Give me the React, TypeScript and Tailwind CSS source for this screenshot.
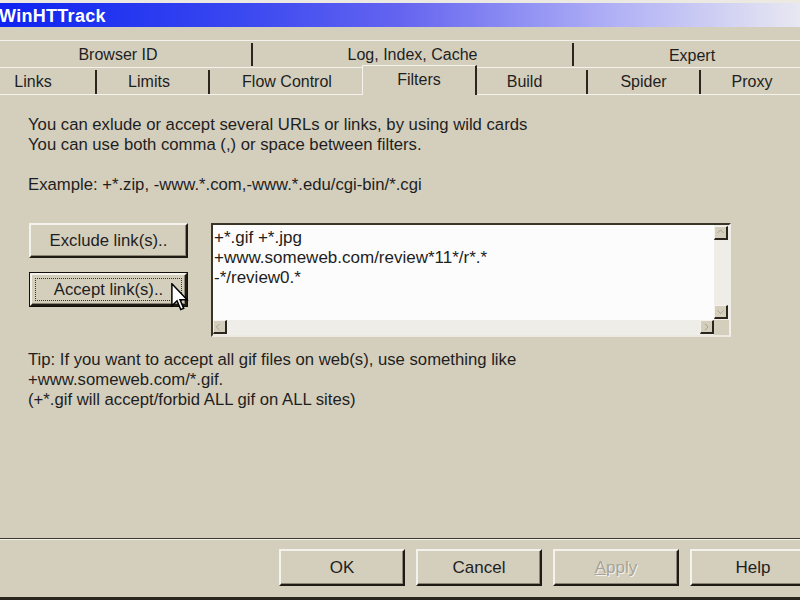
import React from "react";

const btn =
  "flex items-center justify-center border-2 border-t-[#f4f2ec] border-l-[#f4f2ec] border-r-[#1e1a14] border-b-[#1e1a14] shadow-[inset_-1px_-1px_0_#8c8678] bg-[#d4cebd]";

function ArrowBox({ dir }: { dir: "up" | "down" | "left" | "right" }) {
  const pts: Record<string, string> = {
    up: "3,7 7,3 11,7",
    down: "3,5 7,9 11,5",
    left: "7,3 3,7 7,11",
    right: "5,3 9,7 5,11",
  };
  return (
    <div className="w-[14px] h-[14px] bg-[#d4cebd] border border-t-[#f4f2ec] border-l-[#f4f2ec] border-r-[#2a261e] border-b-[#2a261e] border-r-2 border-b-2 flex items-center justify-center">
      <svg width="12" height="12" viewBox="0 0 14 14">
        <polyline points={pts[dir]} fill="none" stroke="#9a9488" strokeWidth="1" />
      </svg>
    </div>
  );
}

export default function App() {
  return (
    <div className="relative w-[800px] h-[600px] overflow-hidden bg-[#d4cebd] flex flex-col text-[#1e1e1e] font-['Liberation_Sans',Arial,sans-serif]">
      {/* Title bar */}
      <div className="h-[3px] bg-[#ebe9e2]" />
      <div className="h-[24px] flex items-center bg-[linear-gradient(90deg,#0e24f0_0%,#3a48f0_30%,#6464f0_50%,#acacf6_75%,#e8e8f2_100%)]">
        <span className="text-white font-bold text-[18px] leading-none -ml-[1px] mt-[1px] tracking-[0.3px]">WinHTTrack</span>
      </div>
      <div className="h-[13px]" />

      {/* Tab row 1 */}
      <div className="h-[27px] flex border-t border-[#f4f2ec] text-[16px]">
        <div className="shrink-0 -ml-[15px] w-[268px] mt-[2px] mb-[1px] border-r-2 border-[#2a261e] flex items-center justify-center pt-[1px]">
          Browser ID
        </div>
        <div className="shrink-0 w-[321px] mt-[2px] mb-[1px] border-r-2 border-[#2a261e] flex items-center justify-center pt-[1px]">
          Log, Index, Cache
        </div>
        <div className="shrink-0 w-[240px] flex items-center justify-center pt-[3px] pr-[4px]">Expert</div>
      </div>

      {/* Tab row 2 */}
      <div className="h-[28px] flex text-[16px]">
        <div className="shrink-0 -ml-[29px] w-[126px] border-t border-b border-[#f4f2ec] flex">
          <div className="flex-1 mt-[2px] border-r-2 border-[#2a261e] flex items-center justify-center">Links</div>
        </div>
        <div className="shrink-0 w-[113px] border-t border-b border-[#f4f2ec] flex">
          <div className="flex-1 mt-[2px] border-r-2 border-[#2a261e] flex items-center justify-center pr-[7px]">Limits</div>
        </div>
        <div className="shrink-0 w-[152px] border-t border-b border-[#f4f2ec] flex items-center justify-center pl-[2px] pt-[2px]">
          Flow Control
        </div>
        <div className="shrink-0 relative z-10 -mt-[2px] h-[30px] w-[115px] bg-[#d4cebd] border-l border-t border-[#f4f2ec] border-r-2 border-r-[#2a261e] flex items-center justify-center pb-[1px]">
          Filters
        </div>
        <div className="shrink-0 w-[111px] border-t border-b border-[#f4f2ec] flex">
          <div className="flex-1 mt-[2px] border-r-2 border-[#2a261e] flex items-center justify-center pr-[14px]">Build</div>
        </div>
        <div className="shrink-0 w-[113px] border-t border-b border-[#f4f2ec] flex">
          <div className="flex-1 mt-[2px] border-r-2 border-[#2a261e] flex items-center justify-center">Spider</div>
        </div>
        <div className="shrink-0 w-[110px] border-t border-b border-[#f4f2ec] flex items-center justify-center pt-[2px] pr-[8px]">Proxy</div>
      </div>

      {/* Content */}
      <div className="flex-1 flex flex-col text-[16.7px] leading-[20px]">
        <div className="pl-[28px] pt-[20px]">
          <div>You can exlude or accept several URLs or links, by using wild cards</div>
          <div>You can use both comma (,) or space between filters.</div>
          <div>&nbsp;</div>
          <div>Example: +*.zip, -www.*.com,-www.*.edu/cgi-bin/*.cgi</div>
        </div>

        <div className="flex mt-[28px] pl-[29px]">
          <div className="flex flex-col gap-[14px] w-[159px] shrink-0">
            <div className={btn + " h-[35px]"}>Exclude link(s)..</div>
            <div className="h-[35px] border border-[#14110c] flex">
              <div className={btn + " flex-1 p-[3px]"}>
                <div className="w-full h-full border border-dotted border-[#3a352c] flex items-center justify-center">
                  Accept link(s)..
                </div>
              </div>
            </div>
          </div>

          {/* Textarea */}
          <div className="shrink-0 ml-[23px] w-[520px] h-[114px] border-2 border-t-[#3a3428] border-l-[#3a3428] border-r-[#f0eee6] border-b-[#ece9e1] bg-[#fbfbfb] flex flex-col">
            <div className="flex-1 flex">
              <div className="flex-1 pl-[1px] pt-[3px] text-[17px] leading-[20px] bg-[#fcfcfc]">
                <div>+*.gif +*.jpg</div>
                <div>+www.someweb.com/review*11*/r*.*</div>
                <div>-*/review0.*</div>
              </div>
              <div className="w-[15px] bg-[#efede7] flex flex-col justify-between pt-[1px] pb-[1px]">
                <ArrowBox dir="up" />
                <ArrowBox dir="down" />
              </div>
            </div>
            <div className="h-[15px] flex">
              <div className="flex-1 bg-[#efede7] flex justify-between">
                <ArrowBox dir="left" />
                <ArrowBox dir="right" />
              </div>
              <div className="w-[15px] bg-[#d4cebd]" />
            </div>
          </div>
        </div>

        <div className="pl-[28px] mt-[13px]">
          <div>Tip: If you want to accept all gif files on web(s), use something like</div>
          <div>+www.someweb.com/*.gif.</div>
          <div>(+*.gif will accept/forbid ALL gif on ALL sites)</div>
        </div>
        <div className="flex-1" />
      </div>

      {/* Separator */}
      <div className="h-[1px] bg-[#3e392e]" />
      <div className="h-[1px] bg-[#f4f2ec]" />

      {/* Bottom buttons */}
      <div className="h-[57px] flex items-start pt-[9px] pl-[279px] gap-[11px] text-[17px]">
        <div className={btn + " w-[126px] h-[37px] shrink-0"}>OK</div>
        <div className={btn + " w-[126px] h-[37px] shrink-0"}>Cancel</div>
        <div className={btn + " w-[126px] h-[37px] shrink-0 text-[#a8a396] [text-shadow:1px_1px_0_#f4f2ec]"}>
          <span>
            <span className="underline">A</span>pply
          </span>
        </div>
        <div className={btn + " w-[126px] h-[37px] shrink-0"}>Help</div>
      </div>
      <div className="h-[3px] bg-[#2a261e]" />

      {/* Mouse cursor */}
      <svg className="absolute left-[171px] top-[283px]" width="18" height="28" viewBox="0 0 12 19">
        <path d="M0.5,0.5 L0.5,15.5 L4,12 L6.5,18 L8.5,17.2 L6,11.3 L10.8,11.3 Z" fill="#ffffff" stroke="#000000" strokeWidth="1" strokeLinejoin="miter" />
      </svg>
    </div>
  );
}
